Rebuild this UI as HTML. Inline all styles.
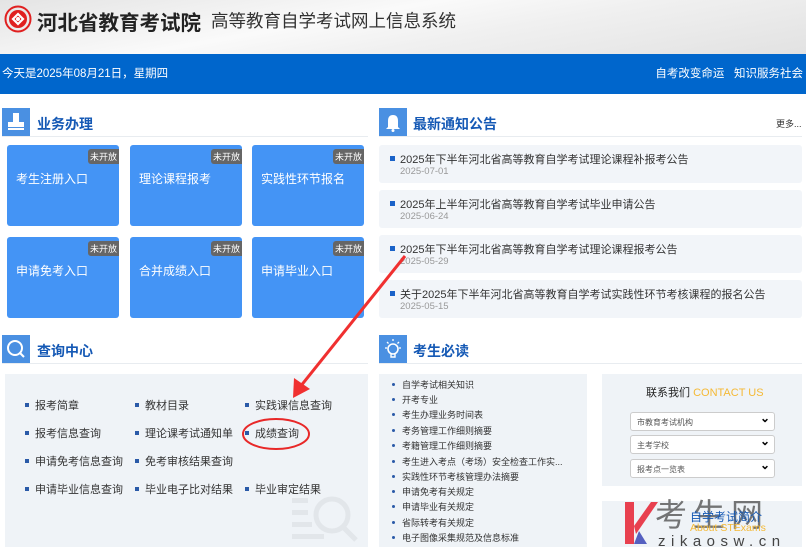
<!DOCTYPE html>
<html><head><meta charset="utf-8"><style>
*{margin:0;padding:0;box-sizing:border-box}
body{width:806px;height:556px;overflow:hidden;background:#fff;font-family:"Liberation Sans","Noto Sans CJK SC",sans-serif;position:relative}
.a{position:absolute;white-space:nowrap}
.hdr{left:0;top:0;width:806px;height:54px;background:linear-gradient(170deg,#e4e4e4 0%,#fafafa 40%,#f0f0f0 60%,#e2e2e2 100%)}
.bar{left:0;top:54px;width:806px;height:40px;background:#0066cc;color:#fff;font-size:11.5px;line-height:40px}
.ib{width:28px;height:28px;background:#4a90e2}
.st{font-size:14px;color:#1559b5;font-weight:bold}
.ln{height:1px;background:#e8ecf0}
.tile{width:112px;height:81px;background:#4494f5;border-radius:3px;color:#fff;font-size:12px;padding:25px 0 0 9px}
.bd{position:absolute;right:0;top:4px;background:#666;color:#fff;font-size:9px;padding:1px 2px;border-radius:3px 0 0 3px}
.nt{left:379px;width:423px;height:38px;background:#f2f5f9;border-radius:3px}
.nt .t{position:absolute;left:21px;top:6px;font-size:11px;color:#333}
.nt .d{position:absolute;left:21px;top:21px;font-size:9.5px;color:#999}
.nt .b{position:absolute;left:11px;top:11px;width:5px;height:5px;background:#1a62c8}
.q{font-size:11px;color:#333}
.q:before{content:"";display:inline-block;width:4px;height:4px;background:#2a5aa8;margin-right:6px;vertical-align:2px}
.r{font-size:9px;color:#333}
.r:before{content:"";display:inline-block;width:3px;height:3px;border-radius:50%;background:#2a5aa8;margin-right:7px;vertical-align:2px}
.sel{left:630px;width:145px;height:19px;border:1px solid #ccc;border-radius:3px;background:#fff;font-size:8px;color:#555;padding:4px 6px}
.sel:after{content:"⌄";position:absolute;right:4px;top:-2px;font-size:12px;color:#000;font-weight:bold}
</style></head><body>
<div class="a hdr"></div>
<svg class="a" style="left:4px;top:5px" width="28" height="28" viewBox="0 0 28 28"><circle cx="14" cy="14" r="12.5" fill="none" stroke="#e02020" stroke-width="2"/><circle cx="14" cy="14" r="9" fill="#e02020"/><path d="M9 14 L14 9 L19 14 L14 19 Z" fill="none" stroke="#fff" stroke-width="2.2"/><circle cx="14" cy="14" r="2" fill="#fff"/></svg>
<div class="a" style="left:37px;top:6px;font-size:20.5px;font-weight:bold;color:#222">河北省教育考试院</div>
<div class="a" style="left:211px;top:8px;font-size:17.5px;color:#333">高等教育自学考试网上信息系统</div>
<div class="a bar"><span style="position:absolute;left:2px">今天是2025年08月21日，星期四</span><span style="position:absolute;right:3px">自考改变命运&nbsp;&nbsp;&nbsp;知识服务社会</span></div>

<div class="a ib" style="left:2px;top:108px"><svg width="28" height="28"><rect x="11" y="5" width="6" height="9" fill="#fff"/><rect x="6" y="14" width="16" height="5" fill="#fff"/><rect x="6" y="20" width="16" height="2" fill="#fff"/></svg></div>
<div class="a st" style="left:37px;top:114px">业务办理</div>
<div class="a ln" style="left:2px;top:136px;width:366px"></div>

<div class="a tile" style="left:7px;top:145px">考生注册入口<span class="bd">未开放</span></div>
<div class="a tile" style="left:130px;top:145px">理论课程报考<span class="bd">未开放</span></div>
<div class="a tile" style="left:252px;top:145px">实践性环节报名<span class="bd">未开放</span></div>
<div class="a tile" style="left:7px;top:237px">申请免考入口<span class="bd">未开放</span></div>
<div class="a tile" style="left:130px;top:237px">合并成绩入口<span class="bd">未开放</span></div>
<div class="a tile" style="left:252px;top:237px">申请毕业入口<span class="bd">未开放</span></div>

<div class="a ib" style="left:379px;top:108px"><svg width="28" height="28"><path d="M9 19 L9 13 Q9 7 14 7 Q19 7 19 13 L19 19 L21 21 L7 21 Z" fill="#fff"/><circle cx="14" cy="22.5" r="1.5" fill="#fff"/></svg></div>
<div class="a st" style="left:413px;top:114px">最新通知公告</div>
<div class="a" style="left:776px;top:117px;font-size:9px;color:#333">更多...</div>
<div class="a ln" style="left:379px;top:136px;width:423px"></div>

<div class="a nt" style="top:145px"><span class="b"></span><span class="t">2025年下半年河北省高等教育自学考试理论课程补报考公告</span><span class="d">2025-07-01</span></div>
<div class="a nt" style="top:190px"><span class="b"></span><span class="t">2025年上半年河北省高等教育自学考试毕业申请公告</span><span class="d">2025-06-24</span></div>
<div class="a nt" style="top:235px"><span class="b"></span><span class="t">2025年下半年河北省高等教育自学考试理论课程报考公告</span><span class="d">2025-05-29</span></div>
<div class="a nt" style="top:280px"><span class="b"></span><span class="t">关于2025年下半年河北省高等教育自学考试实践性环节考核课程的报名公告</span><span class="d">2025-05-15</span></div>

<div class="a ib" style="left:2px;top:335px"><svg width="28" height="28"><circle cx="13" cy="13" r="7" fill="none" stroke="#fff" stroke-width="2"/><path d="M18 18 L22 22" stroke="#fff" stroke-width="2"/></svg></div>
<div class="a st" style="left:37px;top:341px">查询中心</div>
<div class="a ln" style="left:2px;top:363px;width:366px"></div>
<div class="a" style="left:5px;top:374px;width:363px;height:173px;background:#eff3f7"></div>
<svg class="a" style="left:290px;top:490px" width="70" height="60"><g fill="#e2e6ea"><rect x="2" y="8" width="16" height="5"/><rect x="2" y="20" width="16" height="5"/><rect x="2" y="32" width="20" height="5"/><rect x="2" y="44" width="32" height="5"/></g><circle cx="42" cy="25" r="16" fill="none" stroke="#e2e6ea" stroke-width="5"/><path d="M53 37 L66 50" stroke="#e2e6ea" stroke-width="5"/></svg>
<div class="a q" style="left:25px;top:397px">报考简章</div>
<div class="a q" style="left:135px;top:397px">教材目录</div>
<div class="a q" style="left:245px;top:397px">实践课信息查询</div>
<div class="a q" style="left:25px;top:425px">报考信息查询</div>
<div class="a q" style="left:135px;top:425px">理论课考试通知单</div>
<div class="a q" style="left:245px;top:425px">成绩查询</div>
<div class="a q" style="left:25px;top:453px">申请免考信息查询</div>
<div class="a q" style="left:135px;top:453px">免考审核结果查询</div>
<div class="a q" style="left:25px;top:481px">申请毕业信息查询</div>
<div class="a q" style="left:135px;top:481px">毕业电子比对结果</div>
<div class="a q" style="left:245px;top:481px">毕业审定结果</div>

<div class="a ib" style="left:379px;top:335px"><svg width="28" height="28"><circle cx="14" cy="14" r="5" fill="none" stroke="#fff" stroke-width="1.6"/><path d="M12 19 L12 22 L16 22 L16 19" fill="none" stroke="#fff" stroke-width="1.4"/><g stroke="#fff" stroke-width="1.3"><path d="M14 4 L14 6"/><path d="M6 13 L8 13"/><path d="M20 13 L22 13"/><path d="M8 7 L9.5 8.5"/><path d="M20 7 L18.5 8.5"/></g></svg></div>
<div class="a st" style="left:413px;top:341px">考生必读</div>
<div class="a ln" style="left:379px;top:363px;width:423px"></div>
<div class="a" style="left:379px;top:374px;width:208px;height:173px;background:#eff3f7"></div>
<div class="a r" style="left:392px;top:378px">自学考试相关知识</div>
<div class="a r" style="left:392px;top:393px">开考专业</div>
<div class="a r" style="left:392px;top:408px">考生办理业务时间表</div>
<div class="a r" style="left:392px;top:424px">考务管理工作细则摘要</div>
<div class="a r" style="left:392px;top:439px">考籍管理工作细则摘要</div>
<div class="a r" style="left:392px;top:455px">考生进入考点（考场）安全检查工作实...</div>
<div class="a r" style="left:392px;top:470px">实践性环节考核管理办法摘要</div>
<div class="a r" style="left:392px;top:485px">申请免考有关规定</div>
<div class="a r" style="left:392px;top:500px">申请毕业有关规定</div>
<div class="a r" style="left:392px;top:516px">省际转考有关规定</div>
<div class="a r" style="left:392px;top:531px">电子图像采集规范及信息标准</div>

<div class="a" style="left:602px;top:374px;width:200px;height:112px;background:#eff3f7"></div>
<div class="a" style="left:646px;top:384px;font-size:11px;color:#222">联系我们 <span style="color:#f5b935">CONTACT US</span></div>
<div class="a sel" style="top:412px">市教育考试机构</div>
<div class="a sel" style="top:435px">主考学校</div>
<div class="a sel" style="top:459px">报考点一览表</div>

<div class="a" style="left:602px;top:501px;width:200px;height:46px;background:#eff3f7"></div>
<svg class="a" style="left:623px;top:500px" width="36" height="46"><path d="M2 2 L11 2 L11 44 L2 44 Z" fill="#e8404f"/><path d="M11 26 L28 2 L35 2 L13 34 Z" fill="#e8404f"/><path d="M11 44 L24 44 L16 31 Z" fill="#5560c0"/></svg>
<div class="a" style="left:655px;top:497px;font-size:32px;line-height:36px;color:#555;letter-spacing:6px;opacity:.8">考生网</div>
<div class="a" style="left:690px;top:508px;font-size:12px;color:#1559b5">自学考试简介</div>
<div class="a" style="left:690px;top:522px;font-size:10.5px;color:#f5b935">About STExams</div>
<div class="a" style="left:658px;top:533px;font-size:15px;color:#444;letter-spacing:5.5px">zikaosw.cn</div>

<svg class="a" style="left:0;top:0" width="806" height="556">
<path d="M405 256 L300 387" stroke="#f03030" stroke-width="3"/>
<path d="M293 398 L294 378 L310 389 Z" fill="#f03030"/>
<ellipse cx="276" cy="434" rx="33" ry="15" fill="none" stroke="#e82828" stroke-width="2"/>
</svg>
</body></html>
